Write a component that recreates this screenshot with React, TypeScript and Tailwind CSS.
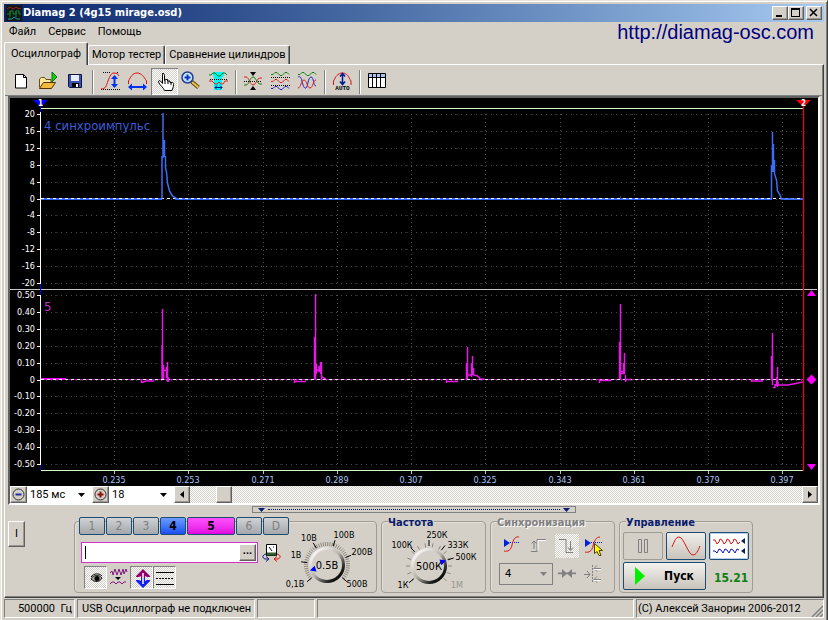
import { useState, type ReactNode } from 'react';

const raised = 'border border-t-white border-l-white border-r-[#606060] border-b-[#606060] shadow-[inset_-1px_-1px_0_#9c9890]';
const sunken = 'border border-t-[#808080] border-l-[#808080] border-r-white border-b-white';
const checker = 'bg-[repeating-conic-gradient(#ffffff_0%_25%,#d4d0c8_0%_50%)] bg-[length:2px_2px]';

const tabs = ['Осциллограф', 'Мотор тестер', 'Сравнение цилиндров'];

const gridX = [114, 188, 263, 337, 411, 485, 560, 634, 708, 782];
const timeLabels = ['0.235', '0.253', '0.271', '0.289', '0.307', '0.325', '0.343', '0.361', '0.379', '0.397'];
const scaleA = ['20', '16', '12', '8', '4', '0', '-4', '-8', '-12', '-16', '-20'];
const scaleB = ['0.50', '0.40', '0.30', '0.20', '0.10', '0', '-0.10', '-0.20', '-0.30', '-0.40', '-0.50'];

const rowY = (top: number, i: number) => Math.round(top + i * 16.9) + 0.5;

const pulses = [
  'M141.5 379v4M142 382.5l4-1.500h8M162 379v-34M162.500 379V309M163.500 379V365M163 371l3-1M167.500 382V362M166.500 378V367M168.500 377v5',
  'M294.500 379v4M295 381.500h11M314.500 379V337M315.500 379V294M316.500 374V364M317 371l2-2M320.500 374V362M319 372v-6M321.500 362v17M322 377l4 2',
  'M446.500 379v4M447 381.500h11M466.500 379V363M467.500 379V347M468 375h3M471.500 377V363M472.500 375V356M473.500 368v7l4 1 3 3h4',
  'M599.500 379v4M600 380.500h11M619.500 379V342M620.500 379V304M621 371.500h4M621 373.500h4M624.500 374V353M623.500 374V363M625.500 375v7M626 379.500h5',
  'M751.500 379v3M752 381h11M771.500 379V356M772.500 385V333M773 387.500h2V384M777.500 387V367M776.500 386V377M778 382v3h10l5-1 10-2',
];

function Scope() {
  return (
    <svg viewBox="10 98 808 388" className="block w-full bg-black" fontFamily="'DejaVu Sans Condensed','DejaVu Sans',sans-serif">
      <g stroke="#4c4c4c" shapeRendering="crispEdges">
        {[114, 295].map((top) =>
          scaleA.map((_, i) => (
            <g key={`${top}-${i}`}>
              <path d={`M46 ${rowY(top, i)}H802`} strokeDasharray="1 4" />
              <path d={`M55 ${rowY(top, i)}H802`} stroke="#2c2c2c" strokeDasharray="3 22" />
            </g>
          ))
        )}
        {gridX.map((x) => (
          <g key={x}>
            <path d={`M${x + 0.5} 114V284M${x + 0.5} 295V466`} strokeDasharray="1 3" />
            <path d={`M${x + 0.5} 471v3`} stroke="#c0c0c0" />
          </g>
        ))}
      </g>
      <g shapeRendering="crispEdges" fill="none">
        <path d="M41 108.500H803M41 470.500H803" stroke="#d8f8d0" />
        <path d="M10 289.500H817" stroke="#c8c8c8" />
        <path d="M40.500 108V470" stroke="#fff" />
        <path d="M40.500 106v6M40.500 284v11M40.500 465v5" stroke="#0000e0" />
        {[114, 295].map((top) =>
          scaleA.map((_, i) => <path key={`${top}-${i}`} d={`M37 ${rowY(top, i)}h3`} stroke="#fff" />)
        )}
        <path d="M41 199H162M175 199H772M782 199H803" stroke="#3366ff" strokeWidth="2" />
        <path d="M620.500 196v3M467.500 197v2" stroke="#24408c" />
        <path d="M41 379.500H803" stroke="#b01cb0" />
        <path d="M41 379H66" stroke="#ff00ff" strokeWidth="2" />
        <path d="M41 198.500H803M41 379.500H803" stroke="#fff" strokeDasharray="3 3" />
      </g>
      <path d="M162 199V156M163 158V113M164.500 157V140M165.500 156v12l1 4 1 11 2 8 3 5 4 2.500" stroke="#3c6cf4" strokeWidth="1.500" fill="none" />
      <path d="M771.500 199V165M772.500 172V132M773.500 172V144M774.500 160v14l2 6 1 11 2 3 2 5h14" stroke="#3c6cf4" strokeWidth="1.500" fill="none" />
      <path d={pulses.join('')} stroke="#e818e8" strokeWidth="1.500" fill="none" />
      <g fontSize="9" fill="#fff" textAnchor="end">
        {scaleA.map((s, i) => <text key={s} x="35" y={rowY(116, i)}>{s}</text>)}
        {scaleB.map((s, i) => <text key={s} x="35" y={rowY(297, i)}>{s}</text>)}
      </g>
      <g fontSize="9" fill="#a8c4f4" textAnchor="middle">
        {timeLabels.map((s, i) => <text key={s} x={gridX[i]} y="483">{s}</text>)}
      </g>
      <g fontSize="13">
        <text x="44" y="130" fill="#3c5cd8">4 синхроимпульс</text>
        <text x="44" y="311" fill="#c030c0">5</text>
      </g>
      <path d="M803.500 106V471" stroke="#c41818" strokeWidth="1.500" />
      <path d="M33 100h15l-7.500 7z" fill="#0000ff" />
      <path d="M796 100h15l-7.500 7z" fill="#ff0000" />
      <g fontSize="8" fontWeight="700" fill="#fff" textAnchor="middle">
        <text x="40.500" y="106">1</text>
        <text x="803.500" y="106">2</text>
      </g>
      <path d="M807 296h9l-4.500-6zM807 464h9l-4.500 6zM811.500 374.500l5 5-5 5-5-5z" fill="#ff00ff" />
    </svg>
  );
}

function Icon({ children, size = 27 }: { children: ReactNode; size?: number }) {
  return (
    <svg width={size} height={size} viewBox={`0 0 ${size} ${size}`} fill="none" className="block shrink-0">
      {children}
    </svg>
  );
}

function Tool({ label, active, children }: { label: string; active?: boolean; children: ReactNode }) {
  return (
    <button type="button" aria-label={label} className={`h-[27px] w-[27px] ${active ? `${checker} shadow-[inset_1px_1px_0_#808080,inset_-1px_-1px_0_#fff]` : ''}`}>
      <Icon>{children}</Icon>
    </button>
  );
}

const Separator = () => <div className="mx-[3px] h-6 w-[2px] border-l border-r border-l-[#808080] border-r-white" />;

const wave = (y: number) => `M4 ${y}h2l2-2h2l3 3h2l3-3h2l2 2`;

function Toolbar() {
  return (
    <div className="flex items-center border-b border-[#808080] px-[3px] pt-[3px]">
      <Tool label="Новый">
        <path d="M7.500 6.500h8l3 3v10.500h-11z" fill="#fff" stroke="#000" />
        <path d="M15.500 6.500v3h3" stroke="#000" />
      </Tool>
      <Tool label="Открыть">
        <path d="M4.500 19.500V11l2-1.500h3l1.500 2h5v2.500" fill="#f8e89c" stroke="#6b4c10" />
        <path d="M4.500 20.500l4-6h12l-4 6z" fill="#f4b83c" stroke="#4a3408" />
        <path d="M17 4v10l5-5z" fill="#10d010" stroke="#087008" />
      </Tool>
      <Tool label="Сохранить">
        <path d="M6.500 6.500h13v13h-12l-1-1z" fill="#3c50b0" stroke="#101840" />
        <path d="M9 7h8v6H9z" fill="#e8ecf8" />
        <path d="M10 15h7v4h-7z" fill="#000" />
        <path d="M14 16h2v3h-2z" fill="#fff" />
      </Tool>
      <Separator />
      <Tool label="Амплитуда">
        <path d="M6 4.500h7M20 4.500h2M4 21.500h19" stroke="#000" strokeDasharray="1 1" />
        <path d="M4 21c5 0 5-3 7-8s3-8 6-8 4 1 5 3" stroke="#e01010" />
        <path d="M17.500 9v9" stroke="#0030f0" strokeWidth="2" />
        <path d="M14 11l3.500-4 3.500 4zM14 16l3.500 4 3.500-4z" fill="#0030f0" />
      </Tool>
      <Tool label="Период">
        <path d="M4.500 16v-3c2-4 4-8 8.500-8s7 4 9.500 8v3" stroke="#e01010" />
        <path d="M7 19h13" stroke="#0030f0" strokeWidth="2" />
        <path d="M8 15.500l-4 3.500 4 3.500zM19 15.500l4 3.500-4 3.500z" fill="#0030f0" />
      </Tool>
      <Tool label="Рука" active>
        <path d="M11.500 5.500c1.500 0 2 .5 2 2v5l1-1h2v1.500h2.500v1.500h2.500c1 .5 1 1 1 2 0 3-1 4-1.500 6h-7.500c-1-3-5-5.500-6-8.500 0-1.500 1-2 2-1l2 2.500V7c0-1 0-1.500 1-1.500z" fill="#fff" stroke="#000" />
        <path d="M14 12v4M17 13v3M20 15v2" stroke="#000" />
      </Tool>
      <Tool label="Лупа">
        <path d="M13.500 13.500l7 6" stroke="#5c4410" strokeWidth="4" />
        <path d="M14 14l6.500 5.500" stroke="#f0c050" strokeWidth="2" />
        <circle cx="9.500" cy="9.500" r="5.500" fill="#c4e8ff" stroke="#243c8c" strokeWidth="1.500" />
        <path d="M6.500 9.500h6M9.500 6.500v6" stroke="#1030c0" strokeWidth="2" />
      </Tool>
      <Tool label="Сжать">
        <path d="M8 4h11v3l-2 3v12H9V10L8 7z" fill="#00f4f4" />
        <path d={wave(7)} stroke="#108010" />
        <path d="M5 11.500h18" stroke="#000" strokeDasharray="1 1" />
        <path d="M4 13h3l3 3h2l2-2 2 2h2l2-3h3" stroke="#e02020" />
        <path d="M10 19.500h7M12 17.500l-2 2 2 2M15 17.500l2 2-2 2" stroke="#001880" />
      </Tool>
      <Separator />
      <Tool label="Свести">
        <path d="M10 4h6l-3 4zM10 22h6l-3-4z" fill="#000" />
        <path d="M4 13.500h18" stroke="#000" strokeDasharray="1 1" />
        <path d="M4 9h2c3 0 4 8 7 8s4-7 7-7h2" stroke="#e02020" />
        <path d="M4 17h2c3 0 4-8 7-8s4 7 7 7h2" stroke="#108010" />
      </Tool>
      <Tool label="Разделить">
        <path d={wave(6.5)} stroke="#108010" />
        <path d="M4 9.500h19M4 17.500h19" stroke="#000" strokeDasharray="1 1" />
        <path d={wave(13.5)} stroke="#e02020" />
        <path d={wave(20.5)} stroke="#2020c0" />
      </Tool>
      <Tool label="Наложить">
        <path d={wave(6.5)} stroke="#108010" />
        <path d="M4 9c2-1 3 0 4 4s2 8 4 7 2-11 5-11 2 9 5 9" stroke="#2020c0" />
        <path d="M4 20c3 0 3-8 6-8s3 8 6 8 3-8 6-8" stroke="#e02020" />
      </Tool>
      <Separator />
      <Tool label="Авто">
        <path d="M4.500 17v-4c2-4 4-8 9-8s6 4 8.500 8v4" stroke="#e01010" />
        <path d="M13.500 7v9M11 8.500l2.500-3 2.500 3M11 13.500l2.500 3 2.500-3" stroke="#001890" strokeWidth="1.500" />
        <text x="13.500" y="22" textAnchor="middle" fontSize="6" fontWeight="700" fill="#000" fontFamily="'Liberation Mono',monospace">AUTO</text>
      </Tool>
      <Separator />
      <Tool label="Таблица">
        <path d="M4.500 5.500h17v14h-17z" fill="#fff" stroke="#000" />
        <path d="M5 6h16v3H5z" fill="#a8c4f0" />
        <path d="M5 9.500h16M8.500 6v13M12.500 6v13M16.500 6v13" stroke="#000" />
      </Tool>
    </div>
  );
}

function ScaleSelect({ label, value, sign, options, color }: { label: string; value: string; sign: string; options: string[]; color: string }) {
  const [v, setV] = useState(value);
  return (
    <div className="flex w-[82px] shrink-0">
      <button type="button" aria-label={`${label} ${sign}`} className={`flex h-[17px] w-[17px] items-center justify-center bg-[#d4d0c8] ${raised}`}>
        <Icon size={13}>
          <circle cx="6.500" cy="6.500" r="5.500" stroke="#333" />
          <path d={sign === '+' ? 'M3.500 6.500h6M6.500 3.500v6' : 'M3.500 6.500h6'} stroke={color} strokeWidth="2" />
        </Icon>
      </button>
      <div className="relative min-w-0 flex-1 bg-white">
        <select aria-label={label} value={v} onChange={(e) => setV(e.target.value)} className="block h-[17px] w-full appearance-none pl-[3px] text-[11px] leading-[17px] outline-none">
          {options.map((o) => <option key={o}>{o}</option>)}
        </select>
        <svg width="7" height="4" className="pointer-events-none absolute top-[7px] right-[7px]"><path d="M0 0h7L3.500 4z" /></svg>
      </div>
    </div>
  );
}

function ScopeFooter() {
  return (
    <div className="flex h-[17px] bg-[#d4d0c8]">
      <ScaleSelect label="Развертка" value="185 мс" sign="-" options={['185 мс', '370 мс']} color="#2030a0" />
      <ScaleSelect label="Масштаб" value="18" sign="+" options={['18', '36']} color="#901010" />
      <button type="button" aria-label="Назад" className={`flex h-[17px] w-[16px] items-center justify-center ${raised}`}>
        <svg width="4" height="7"><path d="M4 0v7L0 3.500z" /></svg>
      </button>
      <div className={`flex flex-1 pl-[26px] ${checker}`}>
        <div className={`w-4 bg-[#d4d0c8] ${raised}`} />
      </div>
      <button type="button" aria-label="Вперед" className={`flex h-[17px] w-[16px] items-center justify-center ${raised}`}>
        <svg width="4" height="7"><path d="M0 0v7l4-3.500z" /></svg>
      </button>
    </div>
  );
}

const idle = 'w-[26px] bg-linear-to-b from-[#d0d2d4] to-[#a4a8ac] text-[#808080]';

const channels = [
  { name: '1', style: idle },
  { name: '2', style: idle },
  { name: '3', style: idle },
  { name: '4', style: 'w-[26px] bg-linear-to-b from-[#6c9cff] to-[#1c4cf0] font-bold text-black' },
  { name: '5', style: 'w-[48px] bg-linear-to-b from-[#ff50ff] to-[#e000e0] font-bold text-black' },
  { name: '6', style: idle },
  { name: 'D', style: idle },
];

type DialProps = {
  width: number;
  cx: number;
  value: string;
  step: number;
  major: number[];
  pointer: number;
  marks: { text: string; x: number; y: number; off?: boolean }[];
};

// angles run clockwise from straight up
function Dial({ width, cx, value, step, major, pointer, marks }: DialProps) {
  const cy = 41;
  const tick = (a: number, r1: number, r2: number) => {
    const s = Math.sin((a * Math.PI) / 180);
    const c = Math.cos((a * Math.PI) / 180);
    return `M${cx + r1 * s} ${cy - r1 * c}L${cx + r2 * s} ${cy - r2 * c}`;
  };
  const minor = Array.from({ length: Math.floor(260 / step) + 1 }, (_, i) => -130 + i * step);
  return (
    <svg width={width} height="66" viewBox={`0 0 ${width} 66`} role="img" aria-label={value} fontFamily="'DejaVu Sans Condensed','DejaVu Sans',sans-serif">
      <defs>
        <linearGradient id={`rim${cx}`} x1="0.100" y1="0.100" x2="0.850" y2="0.900">
          <stop offset="0" stopColor="#ffffff" />
          <stop offset="0.500" stopColor="#b8b4ac" />
          <stop offset="0.850" stopColor="#202020" />
          <stop offset="1" stopColor="#000000" />
        </linearGradient>
      </defs>
      <path d={minor.map((a) => tick(a, 19, 23)).join('')} stroke="#8c8880" fill="none" />
      <path d={major.map((a) => tick(a, 20, 26)).join('')} stroke="#000" fill="none" />
      <circle cx={cx} cy={cy} r="18" fill={`url(#rim${cx})`} />
      <circle cx={cx} cy={cy} r="15" fill="#d4d0c8" />
      <path d={`M${cx - 3} ${cy - 12}h6l-3-6z`} fill="#0000ff" transform={`rotate(${pointer} ${cx} ${cy})`} />
      <text x={cx} y={cy + 4} fontSize="11" textAnchor="middle">{value}</text>
      {marks.map((m) => (
        <text key={m.text} x={m.x} y={m.y} fontSize="9" textAnchor="middle" fill={m.off ? '#98948c' : '#000'}>{m.text}</text>
      ))}
    </svg>
  );
}

const box = 'rounded-[4px] border border-[#a09c94] shadow-[inset_1px_1px_0_#e4e0d8]';
const boldFont = "font-['DejaVu_Sans_Condensed','DejaVu_Sans',sans-serif] font-bold";

function Group({ title, off, className, children }: { title: string; off?: boolean; className: string; children: ReactNode }) {
  return (
    <section aria-label={title} className={`h-[72px] shrink-0 ${box} ${className}`}>
      <h2 className={`-mt-[6px] ml-[6px] w-fit bg-[#d4d0c8] text-[11px] leading-[14px] ${boldFont} ${off ? 'text-[#808080] [text-shadow:1px_1px_0_#fff]' : 'text-[#0a1c6c]'}`}>{title}</h2>
      {children}
    </section>
  );
}

function ChannelBox() {
  const [name, setName] = useState('');
  return (
    <section className={`flex h-[72px] w-[303px] shrink-0 ${box}`}>
      <div className="w-[210px] pl-1">
        <div className="-mt-[5px] flex gap-px">
          {channels.map((c) => (
            <button key={c.name} type="button" className={`h-[18px] shrink-0 rounded-[2px] border border-[#1c4c74] font-['DejaVu_Sans_Condensed','DejaVu_Sans',sans-serif] text-[12px] leading-[15px] ${c.style}`}>{c.name}</button>
          ))}
        </div>
        <div className="mt-[7px] ml-[2px] flex items-center gap-1">
          <div className="flex h-[21px] w-[177px] items-center border border-[#d030d0] bg-white p-px">
            {name === '' && <span className="ml-[2px] h-[13px] w-px bg-black" />}
            <input aria-label="Имя канала" value={name} onChange={(e) => setName(e.target.value)} className="min-w-0 flex-1 pl-[2px] text-[11px] outline-none" />
            <button type="button" className={`flex h-full w-[17px] items-center justify-center bg-[#d4d0c8] pb-1 text-[11px] leading-[9px] font-bold ${raised}`}>...</button>
          </div>
          <button type="button" aria-label="Заменить прибор">
            <Icon size={19}>
              <path d="M4.500 1.500h10v11h-10z" fill="#fff" stroke="#000" />
              <path d="M5 9.500h9v3H5z" fill="#306030" />
              <path d="M7 4l3 4M11 4h1" stroke="#000" />
              <path d="M4 11c-4 1-4 4-1 5h3M4 13.500l3 2.500-3 2.500" stroke="#101880" />
              <path d="M15 11c4 1 4 4 1 5h-3M15 13.500l-3 2.500 3 2.500" stroke="#e01010" />
            </Icon>
          </button>
        </div>
        <div className="mt-[3px] ml-[5px] flex">
          <button type="button" aria-label="Показать" className={`h-[23px] w-[23px] ${sunken} ${checker}`}>
            <Icon size={21}>
              <path d="M6 12c2-4 8-5 11-1-2 4-7 5-11 1z" fill="#a8a49c" stroke="#202020" />
              <circle cx="12" cy="11.500" r="2.500" fill="#000" />
              <path d="M6 10c3-4 8-4 11-1" stroke="#000" />
            </Icon>
          </button>
          <button type="button" aria-label="Фильтр" className="h-[23px] w-[23px]">
            <Icon size={23}>
              <path d="M3 7l2-2 1 4 2-6 2 6 2-6 2 6 2-6 1 5 2-5 1 3" stroke="#801880" />
              <path d="M8 11h6l-3 3z" fill="#000" />
              <path d="M3 18l2-2h2l2 2 2-2h2l2 2 2-2h2" stroke="#801880" />
            </Icon>
          </button>
          <button type="button" aria-label="Инверсия" className={`h-[23px] w-[23px] ${sunken} ${checker}`}>
            <Icon size={21}>
              <path d="M5 9l7-7 7 7v1h-3l-2-1v3h-4V9l-2 1H5z" fill="#900070" />
              <path d="M5 14l7 7 7-7v-1h-3l-2 1v-3h-4v3l-2-1H5z" fill="#1020f0" />
              <path d="M12 6v11" stroke="#fff" strokeWidth="1.500" />
            </Icon>
          </button>
          <button type="button" aria-label="Линии" className={`h-[23px] w-[23px] ${sunken} ${checker}`}>
            <Icon size={21}>
              <path d="M2 5.500h18M2 17.500h18" stroke="#000" />
              <path d="M2 11.500h18" stroke="#000" strokeDasharray="2 1" />
            </Icon>
          </button>
        </div>
      </div>
      <div className="pt-[2px]">
        <Dial
          width={91}
          cx={42}
          value="0.5В"
          step={6}
          pointer={-108}
          major={[-130, -83, -32, 18, 68, 130]}
          marks={[
            { text: '0,1В', x: 10, y: 63 },
            { text: '1В', x: 11, y: 34 },
            { text: '10В', x: 24, y: 17 },
            { text: '100В', x: 59, y: 14 },
            { text: '200В', x: 77, y: 31 },
            { text: '500В', x: 72, y: 63 },
          ]}
        />
      </div>
    </section>
  );
}

const control = 'flex h-[28px] items-center justify-center border rounded-[2px]';

function SyncBox() {
  return (
    <Group title="Синхронизация" off className="w-[125px]">
      <div className="mt-1 ml-[10px] flex gap-[3px]">
        <button type="button" aria-label="Уровень">
          <Icon size={24}>
            <path d="M3 5l6 4-6 4z" fill="#0020e0" />
            <path d="M9 8.500h10" stroke="#0020e0" strokeDasharray="1 1" />
            <path d="M3 17c4 1 7-1 8-6s3-9 7-8" stroke="#e01010" />
          </Icon>
        </button>
        <button type="button" aria-label="Фронт" disabled>
          <Icon size={24}>
            <path d="M3 17.500h6v-12h9M6 15V7M3.500 9.500L6 7l2.500 2.500" stroke="#808080" />
            <path d="M10 16V6.500h8" stroke="#fff" />
          </Icon>
        </button>
        <button type="button" aria-label="Спад" disabled className={checker}>
          <Icon size={24}>
            <path d="M4 5.500h7v13h7M15.500 7v9M13 13.500l2.500 3 2.500-3" stroke="#808080" />
          </Icon>
        </button>
        <button type="button" aria-label="Выбрать уровень">
          <Icon size={24}>
            <path d="M3 5l6 4-6 4z" fill="#0020e0" />
            <path d="M9 8.500h11" stroke="#0020e0" strokeDasharray="1 1" />
            <path d="M3 18c4 1 7-1 8-6s3-9 7-9" stroke="#e01010" />
            <path d="M12.500 9.500v10l2.500-2 2 4h2l-2-5h3.500z" fill="#ffff00" stroke="#504000" />
          </Icon>
        </button>
      </div>
      <div className="mt-1 ml-2 flex items-center gap-[2px]">
        <div className="relative">
          <select aria-label="Канал синхронизации" defaultValue="4" className="block h-[22px] w-[54px] appearance-none border border-[#808080] pl-[5px] text-[11px] leading-[14px]">
            <option>4</option>
            <option>5</option>
          </select>
          <svg width="7" height="4" className="pointer-events-none absolute top-[9px] right-[6px]"><path d="M0 0h7L3.500 4z" fill="#808080" /></svg>
        </div>
        <button type="button" aria-label="Сблизить" disabled>
          <Icon size={24}>
            <path d="M3 12.500h18" stroke="#fff" />
            <path d="M3 11.500h18" stroke="#808080" strokeWidth="2" />
            <path d="M7 7l5 4.500L7 16zM17 7l-5 4.500 5 4.500z" fill="#808080" />
          </Icon>
        </button>
        <button type="button" aria-label="Центрировать" disabled>
          <Icon size={24}>
            <path d="M3 12.500h6M6 9l3 3.500L6 16M13 6.500h7M16 3.500l-3 3 3 3M13 17.500h7M16 14.500l-3 3 3 3" stroke="#808080" />
            <path d="M11.500 3v18" stroke="#808080" strokeDasharray="2 1" />
            <path d="M13 7.500h7M13 18.500h7" stroke="#fff" />
          </Icon>
        </button>
      </div>
    </Group>
  );
}

function ControlBox() {
  return (
    <Group title="Управление" className="w-[134px]">
      <div className="mt-[2px] ml-[3px] flex gap-[3px]">
        <button type="button" aria-label="Пауза" disabled className={`${control} w-[40px] border-[#a09c94]`}>
          <svg width="12" height="16" fill="none"><path d="M1.500 1.500h3v13h-3zM7.500 1.500h3v13h-3z" stroke="#808080" /></svg>
        </button>
        <button type="button" aria-label="Одиночный" className={`${control} w-[40px] border-[#1c4c74] bg-linear-to-b from-[#f0eeea] to-[#c8c4bc]`}>
          <svg width="30" height="20" fill="none"><path d="M1 11C4 4 5 1 8 1c5 0 9 18 14 18 3 0 5-4 7-9" stroke="#e01010" /></svg>
        </button>
        <button type="button" aria-label="Непрерывный" className={`${control} w-[40px] border-[#1c4c74] bg-white shadow-[inset_0_0_0_1px_#b8d0f0]`}>
          <svg width="34" height="20" fill="none">
            <path d="M1 4h2l2 4 2-2 1-3 2 1 2 4 2-2 1-3 2 1 2 4 2-2 1-3 2 1 2 4 2-2" stroke="#e01010" />
            <path d="M1 15h2l2 2 2-4 2 1 2 3 2-4 2 1 2 3 2-4 2 1 2 3 2-4 2 1" stroke="#1010c0" />
            <path d="M33 2v6l-4-3zM33 12v6l-4-3z" fill="#102050" />
          </svg>
        </button>
      </div>
      <div className="mt-[2px] ml-[3px] flex items-center">
        <button type="button" className={`${control} ${boldFont} w-[83px] gap-[19px] border-[#1c4c74] bg-linear-to-b from-[#f4f2ee] to-[#c8c4bc] text-[12px]`}>
          <svg width="10" height="18"><path d="M0 0v18l10-9z" fill="#00f000" /></svg>
          Пуск
        </button>
        <output className={`pt-[3px] pl-2 text-[12px] text-[#108010] ${boldFont}`}>15.21</output>
      </div>
    </Group>
  );
}

const cell = `flex h-[19px] items-center ${sunken}`;

export default function App() {
  const [tab, setTab] = useState(0);

  return (
    <div className="flex min-h-screen flex-col border border-t-[#e8e4dc] border-l-[#e8e4dc] border-r-[#404040] border-b-[#404040] bg-[#d4d0c8] p-[3px] font-[Roboto,sans-serif] text-[11px] leading-[14px] text-black shadow-[inset_1px_1px_0_#fff,inset_-1px_-1px_0_#808080]">
      <header className="flex h-[18px] items-center bg-linear-to-r from-[#0a246a] to-[#a6caf0] px-[2px]">
        <svg width="16" height="16" fill="none">
          <path d="M0 0h16v16H0z" fill="#101818" />
          <path d="M1 4l3-2 3 2 3-2 3 2 2-1" stroke="#a02020" />
          <path d="M1 9h3V6h3v3h3V6h3v3h2M4 6v6M10 6v6" stroke="#108030" />
          <path d="M2 14h4l2-2 3 2h3" stroke="#20a0a0" />
        </svg>
        <h1 className={`flex-1 pl-[1px] text-[11px] text-white ${boldFont}`}>Diamag 2 (4g15 mirage.osd)</h1>
        <button type="button" aria-label="Свернуть" className={`h-[14px] w-4 bg-[#d4d0c8] ${raised}`}>
          <svg width="14" height="12"><path d="M3 8h6v2H3z" /></svg>
        </button>
        <button type="button" aria-label="Развернуть" className={`h-[14px] w-4 bg-[#d4d0c8] ${raised}`}>
          <svg width="14" height="12" fill="none"><path d="M2.500 1.500h8v8h-8zM2 2.500h9" stroke="#000" shapeRendering="crispEdges" /></svg>
        </button>
        <button type="button" aria-label="Закрыть" className={`ml-[2px] h-[14px] w-4 bg-[#d4d0c8] ${raised}`}>
          <svg width="14" height="12"><path d="M3 2l7 7M10 2l-7 7" stroke="#000" strokeWidth="1.500" /></svg>
        </button>
      </header>

      <nav className="flex h-5 items-center gap-3 pr-[10px] pl-[5px]">
        <button type="button">Файл</button>
        <button type="button">Сервис</button>
        <button type="button">Помощь</button>
        <a href="http://diamag-osc.com" className="ml-auto font-['Liberation_Sans',sans-serif] text-xl leading-5 text-[#000080]">http://diamag-osc.com</a>
      </nav>

      <div role="tablist" className="flex h-[22px] items-end">
        {tabs.map((t, i) => (
          <button
            key={t}
            type="button"
            role="tab"
            aria-selected={i === tab}
            onClick={() => setTab(i)}
            className={`rounded-t-[2px] border border-t-white border-l-white border-r-[#404040] border-b-0 bg-[#d4d0c8] whitespace-nowrap shadow-[inset_-1px_0_0_#808080] ${i === tab ? 'relative -mb-px h-[23px] px-[6px] pb-px' : 'h-[19px] px-[3px]'}`}
          >
            {t}
          </button>
        ))}
      </div>

      <main className="flex flex-1 flex-col border border-t-white border-l-white border-r-[#404040] border-b-[#404040] shadow-[inset_-1px_-1px_0_#808080]">
        <Toolbar />
        <div className="mr-[3px] ml-[3px] border-2 border-t-[#606060] border-l-[#606060] border-r-white border-b-white">
          <Scope />
          <ScopeFooter />
        </div>

        <div className="mx-auto mt-px flex h-[7px] w-[324px] items-center justify-between border border-[#808080] px-[5px]">
          <svg width="7" height="4"><path d="M0 0h7L3.500 4z" fill="#0a1c6c" /></svg>
          <div className="mx-[3px] flex-1 border-t border-dotted border-[#0a1c6c]" />
          <svg width="7" height="4"><path d="M0 0h7L3.500 4z" fill="#0a1c6c" /></svg>
        </div>

        <div className="flex items-start pt-2 pb-1 pl-[3px]">
          <button type="button" className={`mr-[49px] h-[26px] w-[17px] shrink-0 ${raised}`}>I</button>
          <ChannelBox />
          <div className="ml-1 flex gap-1">
            <Group title="Частота" className="w-[105px]">
              <div className="-mt-[5px]">
                <Dial
                  width={103}
                  cx={47}
                  value="500К"
                  step={20}
                  pointer={72}
                  major={[-130, -45, 0, 38, 72]}
                  marks={[
                    { text: '1К', x: 21, y: 63 },
                    { text: '100К', x: 20, y: 23 },
                    { text: '250К', x: 55, y: 13 },
                    { text: '333К', x: 76, y: 23 },
                    { text: '500К', x: 84, y: 35 },
                    { text: '1М', x: 75, y: 63, off: true },
                  ]}
                />
              </div>
            </Group>
            <SyncBox />
            <ControlBox />
          </div>
        </div>
      </main>

      <footer className="mt-px flex gap-[2px]">
        <div className={`${cell} w-[71px] justify-end pr-[2px]`}>500000&nbsp; Гц</div>
        <div className={`${cell} w-[178px] pl-1 whitespace-nowrap`}>USB Осциллограф не подключен</div>
        <div className={`${cell} w-[58px]`} />
        <div className={`${cell} flex-1`} />
        <div className={`${cell} w-[188px] justify-between pl-px whitespace-nowrap`}>
          (C) Алексей Занорин 2006-2012
          <svg width="12" height="12" className="self-end"><path d="M1 12L12 1M5 12l7-7M9 12l3-3" stroke="#808080" strokeWidth="1.500" /></svg>
        </div>
      </footer>
    </div>
  );
}
